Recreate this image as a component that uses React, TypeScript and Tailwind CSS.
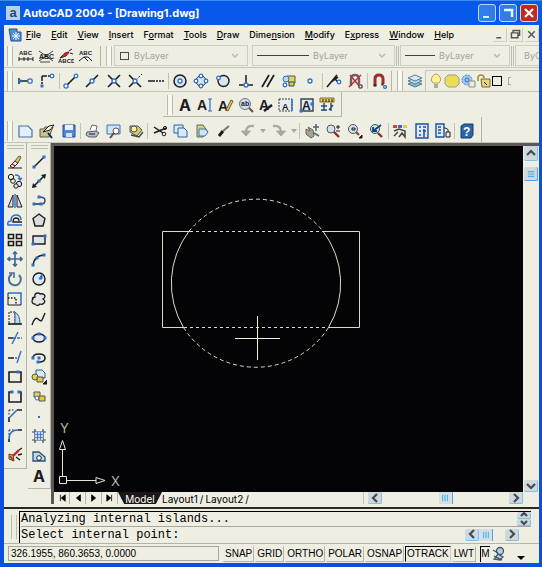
import React from "react";

const K = "#1c1c22";
const B = "#2f6fd0";
const G = "#8c9097";
const Y = "#e6d25a";
const L = "#bcd8ee";

const dot = (x: number, y: number, r = 1.8) => <circle cx={x} cy={y} r={r} fill="#fff" stroke={B} strokeWidth="1.3" />;
const sq = (x: number, y: number) => <rect x={x - 1.5} y={y - 1.5} width="3" height="3" fill={B} stroke="none" />;

const letterText = (s: string, x: number, y: number, size: number) => (
  <text x={x} y={y} fontSize={size} fontWeight="bold" fill={K} stroke="none" fontFamily="Liberation Sans, sans-serif">{s}</text>
);

const icons: Record<string, React.ReactNode> = {
  dimText: <g><path d="M1 9v4M6 9v4M10 9v4M15 9v4M1 11h14" />{letterText("ABC", 1, 7, 6)}</g>,
  dimCross: <g>{letterText("ABC", 1, 11, 7)}<path d="M1 3l14 10M15 3L1 13M2 14h10" strokeWidth="0.8" /></g>,
  dimRed: <g>{letterText("ABCD", 0, 15, 6)}<path d="M2 10l5-5 4-1-3 4z" fill="#7a7a7a" /><path d="M5 8l5-3" stroke="#d22" strokeWidth="2.4" /><path d="M11 3l3-2M12 5l3 1" /></g>,
  dimArc: <g>{letterText("ABC", 1, 7, 6)}<path d="M1 13l5-4 4 4M6 9h4l4 4" /></g>,
  tempTrack: <g><path d="M1 5v6M2 8h8" strokeWidth="1.4" />{sq(2, 8)}{dot(12, 8, 2.2)}</g>,
  snapFrom: <g><path d="M3 3h8M3 3v8" strokeWidth="1.5" strokeDasharray="5 1" />{dot(13, 3)}{sq(3, 13)}</g>,
  endpoint: <g><path d="M3 13L12 4" strokeWidth="1.6" />{dot(13, 3)}{dot(3, 13, 2.1)}</g>,
  midpoint: <g><path d="M2 14L14 2" strokeWidth="1.6" />{dot(8, 8, 2)}</g>,
  intersect: <g><path d="M2 2l12 12M14 2L2 14" strokeWidth="1.6" />{dot(8, 8, 2)}</g>,
  appInt: <g><path d="M2 2l12 12M2 14L8 8" strokeWidth="1.6" /><path d="M9 7l6-6" strokeDasharray="2 1.5" />{dot(8, 8, 2)}</g>,
  extension: <path d="M0 8h7M8 8h2M11 8h2M14 8h2" strokeWidth="1.6" />,
  center: <g><circle cx="8" cy="8" r="6" fill="#dbe5ed" strokeWidth="1.5" />{dot(8, 8, 2)}</g>,
  quadrant: <g><circle cx="8" cy="8" r="5" fill="#dbe5ed" />{dot(8, 3)}{dot(8, 13)}{dot(3, 8)}{dot(13, 8)}</g>,
  tangent: <g><circle cx="8.5" cy="8" r="5.5" fill="#dbe5ed" strokeWidth="1.4" />{dot(3.5, 5)}</g>,
  perp: <g><path d="M8 2v10M1 12h14" strokeWidth="1.5" />{dot(8, 12, 2)}</g>,
  parallel: <path d="M2 14L9 2M7 14l7-12" strokeWidth="1.7" />,
  insert: <g><path d="M6 3h8v7H8z" fill={Y} stroke="#555" /><circle cx="5" cy="6" r="3" fill={L} stroke={B} />{dot(4, 12)}<path d="M8 9h5v4H8z" fill="#e6c93a" stroke="#345" /></g>,
  node: dot(8, 8, 2),
  nearest: <g><path d="M1 14L11 2M5 9l7-5M8 5l4 4" strokeWidth="1.6" />{dot(13, 9)}</g>,
  snapNone: <g><path d="M4 13V6q0-4 4-4t4 4v5" stroke="#666" strokeWidth="2.4" /><path d="M2 14L14 2M3 2l10 12" stroke="#c23" strokeWidth="1.4" /><path d="M12 12h3v3h-3z" fill="#fff" /></g>,
  osnapSet: <g><path d="M4 12V6q0-4 4-4t4 4v5" stroke="#9b2f32" strokeWidth="3" /><path d="M2.500 12.500h3M10.500 11.500h2" strokeWidth="2" />{dot(14, 14, 1.4)}</g>,
  layers: <g stroke="#4d7f9c"><path d="M1 11l7-3 7 3-7 3z" fill="#8fb6c9" /><path d="M1 8l7-3 7 3-7 3z" fill="#bcd8e4" /><path d="M1 5l7-3 7 3-7 3z" fill="#dcebf2" /></g>,
  bulb: <g><path d="M5 10q-3-3-1-6t4-3 4 3-1 6z" fill="#fff29a" stroke="#b9a13d" /><path d="M6 12h4M6 14h4" stroke="#667" /></g>,
  sun: <g><path d="M4 2h8l3 3v6l-3 3H4l-3-3V5z" fill="#eedc55" stroke="#8ea39a" /></g>,
  vpFreeze: <g><circle cx="7" cy="7" r="5" fill="#9fc8ec" stroke="#4d8bc4" strokeDasharray="2 1" /><circle cx="7" cy="7" r="2" stroke={B} /><path d="M9 8h6v6H9z" fill="#ece9d8" stroke={G} /></g>,
  lock: <g><path d="M2 8V5q0-3 3-3t3 3" stroke="#a38b2e" strokeWidth="1.5" /><path d="M5 6h9v8H6z" fill="#e8d67a" stroke="#77652a" /><path d="M8 9l3 3" /></g>,
  mtext: <text x="2" y="14" fontSize="16" fontWeight="bold" fill={K} stroke="none" fontFamily="Inter, sans-serif">A</text>,
  dtext: <g>{letterText("A", 0, 13, 14)}<path d="M11 2h4M13 2v12M11 14h4" stroke={B} strokeWidth="1.2" /></g>,
  editText: <g>{letterText("A", 0, 14, 14)}<path d="M8 13l5-10 2 1-5 10z" fill={Y} stroke="#6b5720" /></g>,
  findText: <g><circle cx="7" cy="7" r="5.5" fill="#cfe0ec" stroke="#617890" />{letterText("ab", 3, 9, 7)}<path d="M11 11l4 4" stroke="#6b4a35" strokeWidth="2" /></g>,
  textStyle: <g>{letterText("A", 1, 13, 14)}<path d="M6 14l8-6" strokeWidth="2.4" /></g>,
  scaleText: <g><path d="M1 2h13v12H1z" fill="#e6edf2" stroke="#3b3f46" strokeDasharray="2 1" /><path d="M14 2v12" stroke={B} strokeWidth="1.500" />{letterText("A", 4, 13, 9)}</g>,
  justify: <g><path d="M2 2h12v12H2z" fill="#dfe9f1" stroke="#345" strokeWidth="1.400" />{letterText("A", 3, 13, 12)}{sq(2, 14)}{sq(13, 7)}</g>,
  spaceText: <g><path d="M1 1h14v4H1z" fill={Y} stroke="#806d24" /><path d="M4 2v3M7 2v3M10 2v3M13 2v3" /><path d="M5 6v8M2 9h6M2 13h6M12 6v8M10 13l4-5" stroke="#254a78" strokeWidth="1.4" /></g>,
  newDoc: <path d="M1 3h9l4 4v7H1z" fill="#e3f0fa" stroke="#3f74ac" strokeWidth="1.2" />,
  open: <g><path d="M1 14V6h4l1-2h8l-4 10z" fill="#c6c48e" stroke="#5c5c3c" /><path d="M4 9l6-6 5-1-4 5z" fill="#f4f4de" /><path d="M9 10l4 5" stroke="#124" strokeWidth="2" /></g>,
  save: <g><path d="M2 2h12v12H2z" fill="#4a8bd8" stroke="#204f94" /><path d="M4 2h8v5H4z" fill="#e8f1fa" stroke="none" /><path d="M5 10h6v4H5z" fill="#dde" stroke="none" /></g>,
  print: <g><path d="M5 7l2-5 5 1-1 5" fill="#fff" stroke="#667" /><path d="M2 9l9-1 3 2-3 4H4l-3-2z" fill="#b3bec4" stroke="#555d65" /><path d="M4 11h6" /></g>,
  preview: <g><path d="M1 2h13v9H1z" fill="#cfe4f6" stroke="#3f74ac" /><circle cx="10" cy="8" r="3" fill="#fff" stroke="#555" /><path d="M8 10l-4 5" stroke="#704634" strokeWidth="2" /></g>,
  publish: <g><path d="M2 3h8l4 4-5 6-7-4z" fill="#d0ca70" stroke="#555" /><circle cx="6" cy="6" r="3" fill="#fff29a" stroke="#555" /><path d="M3 12l8 2 4-5" stroke="#444" strokeWidth="1.4" /></g>,
  cut: <g><path d="M2 4l9 6M2 10l12-5" strokeWidth="1.500" /><circle cx="12" cy="11" r="1.8" /><circle cx="13" cy="5" r="1.6" /></g>,
  copy: <g fill="#d6e9f8" stroke="#2b65a8"><path d="M1 2h9v8H1z" /><path d="M5 5h6l3 3v6H5z" /></g>,
  paste: <g><path d="M3 2h6l5 7-5 5H3z" fill="#dccf73" stroke="#666" /><path d="M5 6h6l3 3-3 4H5z" fill="#cfe4f6" stroke="#3f74ac" /></g>,
  match: <g><path d="M3 13l4-5" strokeWidth="3" /><path d="M7 8l6-5" stroke="#777" strokeWidth="2" /></g>,
  undo: <g stroke="#aaa9a0"><path d="M14 3Q6 2 6 9" strokeWidth="2.400" /><path d="M1.500 8h9L6 13z" fill="#aaa9a0" /></g>,
  redo: <g stroke="#aaa9a0"><path d="M2 3q8-1 8 6" strokeWidth="2.400" /><path d="M5.500 8h9L10 13z" fill="#aaa9a0" /></g>,
  pan: <g><path d="M2 6l4 2-2-4 5 3 1 6-3 2-5-4z" fill="#a5a38f" stroke="#66645a" /><path d="M12 1v7M9 4h6M10 10l5 3" stroke="#49637d" strokeWidth="1.5" /></g>,
  zoomRt: <g><circle cx="6" cy="6" r="4" fill="#cde4f3" stroke="#555" /><path d="M9 9l5 5" stroke="#8e2f24" strokeWidth="2.4" /><path d="M11 4h4M13 2v4M11 8h4" /></g>,
  zoomWin: <g><circle cx="6" cy="6" r="4.5" fill="#cde4f3" stroke="#555" /><path d="M5 5h3v2H5z" /><path d="M9 9l3 3" stroke="#8e4f44" strokeWidth="2.4" /><path d="M12 15h3v-3z" fill={K} /></g>,
  zoomPrev: <g><circle cx="7" cy="6" r="4.5" fill="#cde4f3" stroke="#355" /><path d="M13 2L5 8M5 4v4h4" stroke="#1d3d7d" strokeWidth="1.8" /><path d="M10 10l4 4" stroke="#8e2f24" strokeWidth="2.4" /></g>,
  props: <g><path d="M1 2h4v3H1z" fill="#e13b31" stroke="none" /><path d="M6 2h4v3H6z" fill="#3a64d9" stroke="none" /><path d="M11 2h4v3h-4z" fill="#e8c93c" stroke="none" /><path d="M2 8l5-2 6 2v6l-3-4-3 4M2 13l4-4" stroke="#444" strokeWidth="1.5" /></g>,
  designCtr: <g><path d="M2 1h12v14H2z" fill="#dfeaf7" stroke="#1c4fa3" strokeWidth="1.4" /><path d="M5 4h2M9 4h3M5 8h2M9 8h3M5 12h2M10 6v8" stroke="#1c4fa3" strokeWidth="1.5" /></g>,
  palettes: <g><path d="M1 1h8v13H1z" fill="#dfeaf7" stroke="#1c4fa3" strokeWidth="1.4" /><path d="M3 4h3M3 7h3M3 10h3" stroke="#1c4fa3" strokeWidth="1.5" /><path d="M9 5q5 0 4 4M11 9h4v5h-4z" fill="#efeee2" /></g>,
  help: <g><path d="M2 3l3-2h9v11l-2 3H2z" fill="#2c66a8" stroke="#143d70" /><text x="4" y="13" fontSize="12" fontWeight="bold" fill="#fff" stroke="none" fontFamily="Liberation Sans, sans-serif">?</text></g>,
  erase: <g><path d="M1 14h14" /><path d="M3 12l5-5 3 2-5 5z" fill="#f4ecd8" /><path d="M8 7l4-5 2 1-3 6z" fill="#e5c84e" stroke="#555" /><path d="M5 10l3 2" stroke="#c23" strokeWidth="1.5" /></g>,
  copyObj: <g><circle cx="4" cy="4" r="2.700" /><circle cx="6" cy="8" r="2.300" /><circle cx="12" cy="11" r="2.700" fill="#dde" /><circle cx="9" cy="13" r="2.200" fill="#dde" /><path d="M8 2q5 0 5 4M11 5l2 2 2-2" stroke={B} strokeWidth="1.4" /></g>,
  mirror: <g><path d="M6 2v12H1zM10 2v12h5z" fill="#cfdde7" /><path d="M8 1v14" stroke={B} strokeWidth="1.4" /></g>,
  offset: <g><path d="M15 13H1q-1-4 3-4 0-6 5-6t5 5" stroke={B} strokeWidth="1.500" /><path d="M15 10H6q0-4 3-4t3 3" strokeWidth="1.300" /></g>,
  array: <path d="M1.500 2.500h5v4h-5zM9.500 2.500h5v4h-5zM1.500 9.500h5v4h-5zM9.500 9.500h5v4h-5z" strokeWidth="1.600" />,
  move: <path d="M8 1v14M1 8h14M6 3l2-2 2 2M6 13l2 2 2-2M3 6L1 8l2 2M13 6l2 2-2 2" stroke="#40699b" strokeWidth="1.700" />,
  rotate: <g><path d="M5 3a6 6 0 1 0 7 1" stroke="#4a6f97" strokeWidth="2" /><path d="M2 2h5v5" stroke="#4a6f97" strokeWidth="1.600" /></g>,
  scale: <g><path d="M1 2h13v12" stroke={B} strokeWidth="1.500" /><path d="M1 2v12h13" strokeWidth="1" /><path d="M1 7h8v7" strokeDasharray="1.500 1.500" strokeWidth="1.500" /></g>,
  stretch: <g><path d="M2 2v12h6V2z" strokeDasharray="2 1" /><path d="M8 2q5 3 5 12H8z" fill={L} stroke="#3c638b" /><path d="M1 14h14" strokeWidth="1.500" /></g>,
  trim: <g><path d="M6 8h9" stroke={B} strokeWidth="1.500" strokeDasharray="3 1" /><path d="M1 8h5" strokeWidth="1.500" /><path d="M5 14L11 2" stroke={B} strokeWidth="1.400" /></g>,
  extend: <g><path d="M1 9h6" strokeWidth="1.500" /><path d="M8 9h4" stroke={B} strokeDasharray="2 1" strokeWidth="1.500" /><path d="M10 14l4-12" stroke={B} strokeWidth="1.400" /></g>,
  breakPt: <g><path d="M2 3h12v10H2z" strokeWidth="1.600" />{sq(11, 3)}</g>,
  breakObj: <g><path d="M4 3H2v10h12V3h-2" strokeWidth="1.600" />{sq(5, 3)}{sq(12, 3)}</g>,
  chamfer: <g><path d="M2 14V9" strokeWidth="1.600" /><path d="M2 2h6M2 2v6" strokeDasharray="1.500 1.500" /><path d="M2 10l8-8" stroke={B} strokeWidth="1.600" /><path d="M10 2h5" strokeWidth="1.500" /></g>,
  fillet: <g><path d="M2 14v-3" strokeWidth="1.600" /><path d="M2 2h6M2 2v6" strokeDasharray="1.500 1.500" /><path d="M2 11q0-9 9-9" stroke={B} strokeWidth="1.600" /><path d="M11 2h4" strokeWidth="1.500" /></g>,
  explode: <g><path d="M2 7l4 1 1 6-5-2z" fill="#d9bf3f" stroke="#444" /><path d="M6 9l6-6" stroke="#c22" strokeWidth="2.400" /><path d="M9 10l4 3M11 8l4-1M12 3l3-2" strokeWidth="1.300" /><path d="M3 9l3 4" stroke="#c22" strokeWidth="1.600" /></g>,
  line: <g><path d="M3 13L13 3" strokeWidth="1.500" />{sq(3, 13)}{sq(13, 3)}</g>,
  xline: <g><path d="M2 14L14 2" strokeWidth="1.600" /><path d="M1 15l1-5 4 4zM15 1l-1 5-4-4z" fill={K} stroke="none" />{sq(8, 8)}</g>,
  pline: <g><path d="M3 11h7" strokeWidth="1.400" /><path d="M8 4q6 0 6 3.500T10 11" stroke="#3b4a66" strokeWidth="1.500" />{sq(3, 11)}{sq(10, 11)}{sq(8, 4)}</g>,
  polygon: <path d="M8 2l6 4.500L12 14H4L2 6.500z" fill="#dcdcdc" strokeWidth="1.400" />,
  rect: <g><path d="M2 4h12v8H2z" fill="#dfe3e8" strokeWidth="1.400" />{sq(2, 12)}{sq(14, 4)}</g>,
  arc: <g><path d="M2 14Q3 3 14 3" strokeWidth="1.400" />{sq(2, 13)}{sq(6, 6)}{sq(13, 3)}</g>,
  circle: <g><circle cx="8" cy="8" r="6" fill="#dfe9f1" strokeWidth="1.400" /><path d="M8 8l3-5v5z" stroke={B} fill={B} /></g>,
  cloud: <path d="M4 6q-1-4 3-4 2 0 2 1 4-1 5 2 0 2-2 3 3 2 1 4-2 2-4 1-3 3-5 0-3 0-3-3 0-1 1-2-2-1 2-2z" fill="#e5e5e5" strokeWidth="1.300" />,
  spline: <path d="M1 14q3-9 6-6t4 1 3-7" strokeWidth="1.400" />,
  ellipse: <g><ellipse cx="8" cy="8" rx="6" ry="4" fill="#dfe9f1" strokeWidth="1.400" />{sq(2, 8)}{sq(14, 8)}{sq(8, 4)}</g>,
  ellArc: <g><path d="M2 8q0-4 6-4t6 4-6 4H7" strokeWidth="1.500" />{sq(2, 8)}{sq(7, 12)}{sq(8, 8)}</g>,
  insBlock: <g><path d="M5 1h6l3 3v5H5z" fill="#d6e9f8" stroke="#335c88" /><circle cx="4" cy="8" r="3" fill={Y} stroke="#555" /><path d="M6 8h6v5H6z" fill="#e6c93a" stroke="#555" /><path d="M12 15h4v-4z" fill={K} /></g>,
  mkBlock: <g><path d="M3 3h6v5H3z" fill={Y} stroke="#555" /><circle cx="6" cy="9" r="2" fill="#fff" stroke={B} /><path d="M8 7h6v5H8z" fill="#e6c93a" stroke="#555" /></g>,
  point: <path d="M7 7h2v2H7z" fill={B} stroke="none" />,
  hatch: <g><path d="M4 1v14M12 1v14M1 4h14M1 12h14" strokeWidth="1.200" stroke="#3b4658" /><path d="M4 4h8v8H4z" fill="#c8daeb" stroke="none" /><path d="M6.500 4v8M9.500 4v8M4 6.500h8M4 9.500h8" stroke={B} strokeWidth="0.800" /></g>,
  region: <g><path d="M2 13V4h6l6 5v4z" fill={L} stroke="#27527f" strokeWidth="1.300" /><circle cx="8" cy="10" r="2.300" fill="#fff" /></g>,
};

const toolLabel = (name: string) => name.replace(/([A-Z])/g, " $1").toLowerCase();

function Icon({ name }: { name: string }) {
  return (
    <svg viewBox="0 0 16 16" className="h-4 w-4 shrink-0" fill="none" stroke={K} strokeWidth="1">
      {icons[name]}
    </svg>
  );
}

function Tool({ name }: { name: string }) {
  return (
    <button type="button" aria-label={toolLabel(name)} className="flex h-5 w-5 shrink-0 items-center justify-center">
      <Icon name={name} />
    </button>
  );
}

function Tools({ list }: { list: string[] }) {
  return (
    <>
      {list.map((n, i) => {
        if (n === "|") return <span key={i} className="h-4 w-px shrink-0 bg-[#c3c2b4]" />;
        if (n === " ") return <span key={i} className="w-px shrink-0" />;
        if (n === "v")
          return (
            <button key={i} type="button" aria-label="history" className="flex h-5 w-2 shrink-0 items-center justify-center">
              <svg viewBox="0 0 6 4" className="h-1 w-1.5" fill="#aaa9a0"><path d="M0 0h6L3 4z" /></svg>
            </button>
          );
        return <Tool key={i} name={n} />;
      })}
    </>
  );
}

function Grip() {
  return <span className="h-5 w-1.5 shrink-0 border-x border-[#bdbcae] bg-[#f8f7f0]" />;
}

function Property({ id, label, mark, className }: { id: string; label: string; mark: React.ReactNode; className: string }) {
  return (
    <label htmlFor={id} className={`flex h-[21px] min-w-0 items-center gap-1 border border-[#cfcebe] pr-2 pl-1 ${className}`}>
      {mark}
      <select id={id} disabled aria-label={id} className="min-w-0 flex-1 appearance-none bg-transparent font-['Inter',sans-serif] text-[9px] text-[#a5a497]">
        <option>{label}</option>
      </select>
      <svg viewBox="0 0 8 5" className="h-[5px] w-2 shrink-0" fill="none" stroke="#bdbcae" strokeWidth="1.500"><path d="M1 1l3 3 3-3" /></svg>
    </label>
  );
}

const menus: [string, string, string][] = [
  ["", "F", "ile"], ["", "E", "dit"], ["", "V", "iew"], ["", "I", "nsert"], ["F", "o", "rmat"], ["", "T", "ools"],
  ["", "D", "raw"], ["Dime", "n", "sion"], ["", "M", "odify"], ["E", "x", "press"], ["", "W", "indow"], ["", "H", "elp"],
];

const modify = ["erase", "copyObj", "mirror", "offset", "array", "move", "rotate", "scale", "stretch", "trim", "extend", "breakPt", "breakObj", "chamfer", "fillet", "explode"];
const draw = ["line", "xline", "pline", "polygon", "rect", "arc", "circle", "cloud", "spline", "ellipse", "ellArc", "insBlock", "mkBlock", "point", "hatch", "region", "mtext"];

function SideBar({ list, className }: { list: string[]; className: string }) {
  return (
    <div className={`flex w-[23px] shrink-0 flex-col items-center self-start border-r border-b border-[#b5b4a6] pt-0.5 pb-[3px] ${className}`}>
      <span className="mb-[3px] h-1 w-[17px] shrink-0 border-y border-[#bdbcae]" />
      <div className="flex flex-1 flex-col justify-between">
        {list.map((n) => (
          <button key={n} type="button" aria-label={toolLabel(n)} className="flex h-[19px] w-5 items-center justify-center">
            <Icon name={n} />
          </button>
        ))}
      </div>
    </div>
  );
}

function ScrollBtn({ d, className }: { d: string; className: string }) {
  return (
    <button type="button" aria-label="scroll" className={`flex shrink-0 items-center justify-center rounded-[2px] border-r border-b border-[#7fc0ea] bg-[#cfd8de] ${className}`}>
      <svg viewBox="0 0 10 10" className="h-2.5 w-2.5" fill="none" stroke="#474b50" strokeWidth="2.200"><path d={d} /></svg>
    </button>
  );
}

const LEFT = "M7 1L3 5l4 4";
const RIGHT = "M3 1l4 4-4 4";
const UP = "M1 7l4-4 4 4";
const DOWN = "M1 3l4 4 4-4";

function Thumb() {
  return (
    <span className="flex h-3 w-3.5 shrink-0 items-center justify-center border-r border-[#5a9fe8] bg-[#d5e0e6]">
      <svg viewBox="0 0 10 10" className="h-2 w-2" stroke="#55b8e8" strokeWidth="1.500"><path d="M2 1v8M5 1v8M8 1v8" /></svg>
    </span>
  );
}

function Drawing() {
  return (
    <svg className="min-h-0 w-full flex-1 bg-[#040406]" fill="none" stroke="#dcdac8" strokeWidth="1" role="img" aria-label="Drawing">
      <path d="M136 85.500H108.500V181.500H130M269 85.500H305.500V181.500H274" />
      <path d="M136 85.500H269M130 181.500H274" strokeDasharray="3 3" />
      <path d="M134.800 85.500A86 86 0 0 0 129.500 181.500M269.200 85.500A86 86 0 0 1 274.500 181.500" />
      <path d="M134.800 85.500A86 86 0 0 1 269.200 85.500M129.500 181.500A86 86 0 0 0 274.500 181.500" strokeDasharray="4 3" />
      <path d="M181 192.500H226M203.500 170V214" stroke="#f2f0e0" />
      <path d="M5.500 330.500h7v7h-7zM13 334.500h29M8.500 330V304M5.500 303.500h6l-3-9zM42 331.500v6l9-3z" stroke="#e6e4d4" />
      <g fill="#b8b6aa" stroke="none" fontFamily="Inter, sans-serif" fontSize="13">
        <text x="6" y="287">Y</text>
        <text x="57" y="340">X</text>
      </g>
    </svg>
  );
}

const modes = ["SNAP", "GRID", "ORTHO", "POLAR", "OSNAP", "OTRACK", "LWT"];

export default function App() {
  return (
    <div className="flex min-h-screen w-full flex-col bg-[#0a50e0] font-['Inter',sans-serif] text-black">
      <header className="flex h-[25px] shrink-0 items-center border-t border-[#3c8cf0] bg-[#0759ec] pr-1 pl-1.5">
        <span className="flex h-3.5 w-3.5 items-center justify-center bg-[#b8d0e4] font-['Liberation_Sans',sans-serif] text-[13px] leading-[12px] font-bold text-[#244a78]">a</span>
        <h1 className="ml-[3px] flex-1 text-[11px] font-bold whitespace-nowrap text-white">AutoCAD 2004 - [Drawing1.dwg]</h1>
        <div className="flex gap-[3px]">
          <button type="button" aria-label="Minimize" className="h-[18px] w-[18px] rounded-[3px] border border-[#b8dcf8] bg-[#2f7de8]">
            <svg viewBox="0 0 16 16" stroke="#d8f0ff" strokeWidth="2"><path d="M4 12h6" /></svg>
          </button>
          <button type="button" aria-label="Restore" className="h-[18px] w-[18px] rounded-[3px] border border-[#b8dcf8] bg-[#2f7de8]">
            <svg viewBox="0 0 16 16" fill="none" stroke="#e8f6ff" strokeWidth="2.500"><path d="M4 5h8v7" /></svg>
          </button>
          <button type="button" aria-label="Close" className="h-[18px] w-[18px] rounded-[3px] border border-[#e6d4d0] bg-[#bf2a20]">
            <svg viewBox="0 0 16 16" stroke="#fff" strokeWidth="2.200"><path d="M4 4l8 8M12 4l-8 8" /></svg>
          </button>
        </div>
      </header>

      <div className="mr-[3px] mb-1 ml-1 flex flex-1 flex-col overflow-hidden bg-[#efeee2]">
        <nav className="flex h-[19px] shrink-0 items-center pl-1">
          <svg viewBox="0 0 14 14" className="mr-1 h-3.5 w-3.5 shrink-0" fill="#4a90dc" stroke="#24508c"><path d="M1 1h8v3h4v9H3z" /><path d="M8 4v8M4 8h8M5 5l6 6M11 5l-6 6" stroke="#fff" /></svg>
          <div className="flex gap-2.5">
            {menus.map(([a, u, b]) => (
              <button key={a + u + b} type="button" className="text-[9px] leading-3 font-medium whitespace-nowrap">
                {a}<span className="underline">{u}</span>{b}
              </button>
            ))}
          </div>
          <div className="ml-auto flex gap-0.5">
            {["M4 12h6", "M3 6h8v6H3zM5 6V3h8v6h-2", "M4 4l8 8M12 4l-8 8"].map((d) => (
              <button key={d} type="button" aria-label="document window" className="h-3.5 w-3.5 border-r border-b border-[#d0cfc2]">
                <svg viewBox="0 0 16 16" fill="none" stroke="#55565a" strokeWidth="1.800"><path d={d} /></svg>
              </button>
            ))}
          </div>
        </nav>

        <div className="flex h-[24px] shrink-0 items-center border-b border-[#c6c5b7] pl-[3px]">
          <Grip />
          <div className="ml-[3px] flex"><Tools list={["dimText", "dimCross", "dimRed", "dimArc"]} /></div>
          <span className="mr-[5px] ml-[4px] h-5 w-px bg-[#b5b4a6]" />
          <Grip />
          <Property id="Color" label="ByLayer" className="ml-0.5 w-[134px]" mark={<span className="mx-px h-2 w-[9px] shrink-0 border border-[#54443c]" />} />
          <Property id="Linetype" label="ByLayer" className="ml-1 w-[143px]" mark={<span className="h-px w-[52px] shrink-0 bg-[#5a3535]" />} />
          <span className="mx-px h-5 w-[3px] border-x border-[#bdbcae]" />
          <Property id="Lineweight" label="ByLayer" className="w-[110px]" mark={<span className="h-px w-[30px] shrink-0 bg-[#5a3535]" />} />
          <span className="mx-px h-5 w-[3px] border-x border-[#bdbcae]" />
          <label htmlFor="plot" className="flex h-[21px] min-w-0 flex-1 items-center border border-r-0 border-[#cfcebe] pl-2">
            <select id="plot" disabled aria-label="Plot style" className="w-full min-w-0 appearance-none bg-transparent text-[9px] text-[#a5a497]"><option>ByColor</option></select>
          </label>
        </div>

        <div className="flex h-[24px] shrink-0 items-center border-b border-[#c6c5b7] pt-0.5 pl-[3px]">
          <Grip />
          <div className="ml-[3px] flex w-[373px] shrink-0 items-center justify-between">
            <Tools list={["tempTrack", "snapFrom", "|", "endpoint", "midpoint", "intersect", "appInt", "extension", "|", "center", "quadrant", "tangent", " ", "perp", "parallel", "insert", "node", "|", "nearest", "snapNone", "|", "osnapSet"]} />
          </div>
          <span className="mr-[5px] ml-0.5 h-5 w-px bg-[#b5b4a6]" />
          <Grip />
          <div className="ml-0.5 flex"><Tool name="layers" /></div>
          <div className="flex h-[21px] min-w-0 flex-1 items-center overflow-hidden border-t border-l border-[#c6c5b7] pl-0.5">
            <Icon name="bulb" /><Icon name="sun" /><Icon name="vpFreeze" /><Icon name="lock" />
            <span className="h-2.5 w-2.5 shrink-0 border border-black" />
            <span className="ml-1.5 h-2 w-[3px] border border-r-0 border-[#aaa]" />
          </div>
        </div>

        <div className="ml-[159px] flex h-[25px] w-[179px] shrink-0 items-center border-r border-b border-[#b5b4a6] pt-0.5 pl-1">
          <Grip />
          <div className="flex flex-1 justify-between pr-1 pl-0.5"><Tools list={["mtext", "dtext", "editText", "findText", "textStyle", "scaleText", "justify", "spaceText"]} /></div>
        </div>

        <div className="flex h-[25px] w-[478px] shrink-0 items-center border-r border-[#b5b4a6] pt-0.5 pl-[3px]">
          <Grip />
          <div className="flex flex-1 items-center justify-between pr-1 pl-[3px]">
            <Tools list={["newDoc", "open", "save", "|", "print", "preview", "publish", "|", "cut", "copy", "paste", "match", " ", "undo", "v", "redo", "v", "|", "pan", "zoomRt", "zoomWin", "zoomPrev", "|", "props", "designCtr", "palettes", "|", "help"]} />
          </div>
        </div>

        <main className="flex min-h-0 flex-1 border-t border-[#c6c5b7]">
          <SideBar list={modify} className="h-[326px]" />
          <SideBar list={draw} className="ml-px h-[346px]" />
          <div className="flex min-w-0 flex-1 border-t-[3px] border-l-[3px] border-[#5c5855]">
            <div className="flex min-w-0 flex-1 flex-col">
              <Drawing />
              <div className="flex h-[12px] shrink-0 overflow-hidden text-[10px] leading-[14px]">
                {["M3 1v8M9 1v8L4 5z", "M8 1v8L3 5z", "M2 1v8l5-4z", "M7 1v8M1 1v8l5-4z"].map((d) => (
                  <button key={d} type="button" aria-label="tab scroll" className="flex h-3 w-4 shrink-0 items-center justify-center border-r border-[#b5b4a6]">
                    <svg viewBox="0 0 10 10" className="h-2 w-2" fill="#000" stroke="#000"><path d={d} /></svg>
                  </button>
                ))}
                <button type="button" className="w-[44px] shrink-0 bg-[#1c1815] text-white [clip-path:polygon(0_0,100%_0,86%_100%,14%_100%)]">Model</button>
                <button type="button" className="shrink-0">Layout1</button>
                <span className="mx-0.5">/</span>
                <button type="button" className="shrink-0">Layout2</button>
                <span className="mx-0.5">/</span>
                <div className="ml-auto flex w-[160px] shrink items-center justify-between border-l border-[#c6c5b7] pl-1">
                  <ScrollBtn d={LEFT} className="h-3 w-3.5" />
                  <Thumb />
                  <ScrollBtn d={RIGHT} className="h-3 w-3.5" />
                </div>
              </div>
            </div>
            <div className="flex w-4 shrink-0 flex-col items-center pb-3">
              <ScrollBtn d={UP} className="h-[15px] w-3.5" />
              <button type="button" aria-label="scroll thumb" className="mt-1.5 flex h-3.5 w-3.5 shrink-0 items-center justify-center rounded-[2px] border-r border-b border-[#5a9fe8] bg-[#cfd8de]">
                <svg viewBox="0 0 10 10" className="h-2 w-2" stroke="#55b0dc" strokeWidth="1.400"><path d="M1 2h8M1 5h8M1 8h8" /></svg>
              </button>
              <ScrollBtn d={DOWN} className="mt-auto h-3 w-3.5" />
            </div>
          </div>
        </main>

        <section className="mt-[3px] flex h-[36px] shrink-0 border-t-2 border-[#2c2824] pt-0.5 pr-2 pl-[7px] font-['Liberation_Mono',monospace] text-[12px]">
          <span className="mt-1 mr-0.5 h-6 w-1.5 shrink-0 border-x border-[#bdbcae]" />
          <div className="min-w-0 flex-1 border-t border-l border-black pl-px">
            <div className="flex h-[15px] items-center border-b border-[#a8a79a]">
              <p className="flex-1 leading-[14px] whitespace-pre">Analyzing internal islands...</p>
              <div className="flex flex-col">
                <ScrollBtn d="M2 6l3-3 3 3" className="h-[7px] w-3.5" />
                <ScrollBtn d="M2 4l3 3 3-3" className="h-[7px] w-3.5" />
              </div>
            </div>
            <div className="flex h-[15px] items-center pr-3">
              <label htmlFor="cmd" className="leading-[14px] whitespace-pre">Select internal point:</label>
              <input id="cmd" className="min-w-0 flex-1 bg-transparent outline-none" />
              <ScrollBtn d={LEFT} className="h-3 w-3.5" />
              <Thumb />
              <ScrollBtn d={RIGHT} className="ml-3 h-3 w-3.5" />
            </div>
          </div>
        </section>

        <footer className="flex h-[20px] shrink-0 items-center border-t border-[#b5b4a6] pl-1 font-['Liberation_Sans',sans-serif] text-[10px]">
          <output className="h-[15px] w-[211px] shrink-0 border border-[#a8a79a] pl-0.5 leading-[14px]">326.1955, 860.3653, 0.0000</output>
          <div className="ml-1 flex shrink-0 gap-px">
            {modes.map((m) => (
              <button key={m} type="button" className={`h-[16px] border px-px leading-[14px] ${m === "OTRACK" ? "border-black border-r-[#d0cfc2] border-b-[#d0cfc2]" : "border-transparent border-r-[#b5b4a6] border-b-[#b5b4a6]"}`}>{m}</button>
            ))}
          </div>
          <span className="ml-1 h-[16px] w-2.5 shrink-0 border-t border-l border-black leading-[14px]">M</span>
          <svg viewBox="0 0 16 16" className="ml-px h-4 w-4 shrink-0" fill="#b8cede" stroke="#42566c" strokeWidth="1.300"><circle cx="9" cy="5" r="3.500" /><path d="M2 4l5 3M7 8l5 3-3 3-6-1zM3 10l8 4" /></svg>
          <button type="button" aria-label="status menu" className="ml-1.5 flex h-4 w-4 items-end justify-center pb-0.5">
            <svg viewBox="0 0 8 4" className="h-1 w-2"><path d="M0 0h8L4 4z" /></svg>
          </button>
        </footer>
      </div>
    </div>
  );
}
